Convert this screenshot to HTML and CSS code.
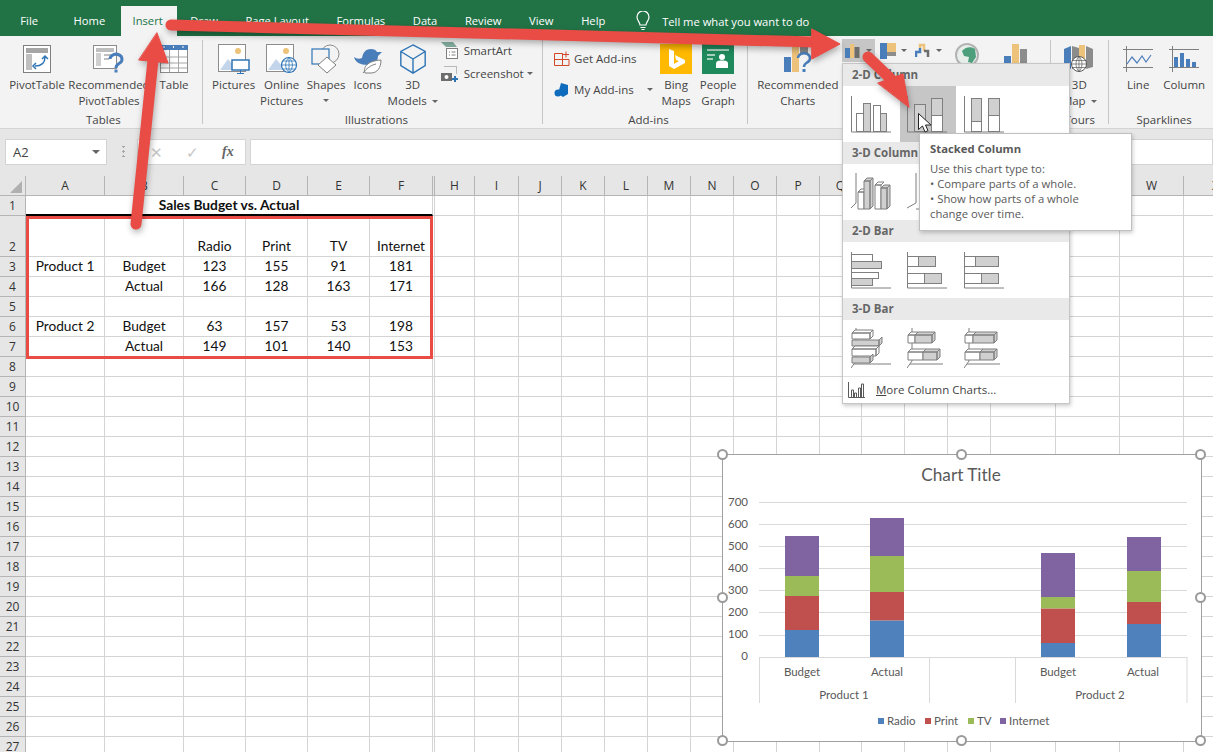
FILE: index.html
```html
<!DOCTYPE html>
<html lang="en">
<head>
  <meta charset="UTF-8">
  <title>Sales Budget - Excel</title>
  <link rel="stylesheet" href="styles.css">
</head>
<body>

<div class="app">
  <div class="tabs">
    <span class="tab tab-file">File</span>
    <span class="tab">Home</span>
    <span class="tab active">Insert</span>
    <span class="tab">Draw</span>
    <span class="tab">Page Layout</span>
    <span class="tab">Formulas</span>
    <span class="tab">Data</span>
    <span class="tab">Review</span>
    <span class="tab">View</span>
    <span class="tab">Help</span>
    <span class="tell-me">
      <svg width="14" height="20" viewBox="0 0 14 20" fill="none" stroke="#fff" stroke-width="1.2"><path d="M4 14c0-3-3-4-3-8a6 6 0 0 1 12 0c0 4-3 5-3 8z"/><path d="M4.500 16.500h5M5.500 18.500h3"/></svg>
      Tell me what you want to do
    </span>
  </div>

  <div class="ribbon">
    <div class="group group-tables">
      <div class="group-body">
        <div class="btn w64">
          <svg width="28" height="28" viewBox="0 0 28 28"><rect x=".5" y=".5" width="27" height="27" fill="#fff" stroke="#7f7f7f"/><rect x="3" y="3" width="22" height="5" fill="#a6a6a6"/><rect x="3" y="9" width="6" height="16" fill="#bfbfbf"/><path d="M12 21c6 0 10-3 10-9M13 18l-3 3 3 3M19 14l3-3 3 3" fill="none" stroke="#2f75b5" stroke-width="1.500"/></svg>
          <span>PivotTable</span>
        </div>
        <div class="btn w80">
          <svg width="32" height="28" viewBox="0 0 32 28"><rect x=".5" y=".5" width="23" height="23" fill="#fff" stroke="#8c8c8c"/><rect x="3" y="3" width="18" height="4" fill="#bfbfbf"/><rect x="3" y="8" width="5" height="13" fill="#d0d0d0"/><path d="M11 10h10M11 14h5" stroke="#bfbfbf" stroke-width="2"/><path d="M17 14a6 5 0 1 1 9 4.500c-2 1.200-3 2-3 4.500" fill="none" stroke="#4a7ebb" stroke-width="3"/><rect x="21.500" y="24.500" width="3" height="3" fill="#4a7ebb"/></svg>
          <span>Recommended PivotTables</span>
        </div>
        <div class="btn w50">
          <svg width="28" height="28" viewBox="0 0 28 28"><rect x=".5" y=".5" width="27" height="27" fill="#fff" stroke="#8c8c8c"/><rect x="0" y="0" width="28" height="5" fill="#4a7ebb"/><path d="M4 1v2M13.500 1v2M23 1v2" stroke="#fff"/><path d="M1 12h26M1 18h26M1 23h26M9.500 5v22M18.500 5v22" stroke="#a6a6a6"/></svg>
          <span>Table</span>
        </div>
      </div>
      <div class="group-label">Tables</div>
    </div>
    <div class="sep"></div>

    <div class="group group-illus">
      <div class="group-body">
        <div class="btn w46">
          <svg width="32" height="30" viewBox="0 0 32 30"><rect x=".5" y=".5" width="27" height="27" fill="#fff" stroke="#8c8c8c"/><circle cx="20" cy="7" r="3" fill="#edc27a"/><path d="M2 26l8-11 7 8v3z" fill="#c3d5ea"/><rect x="14" y="16" width="17" height="10" fill="#fff" stroke="#2f75b5" stroke-width="1.500"/><path d="M22.500 26v3M19 29.500h7" stroke="#2f75b5"/></svg>
          <span>Pictures</span>
        </div>
        <div class="btn w50">
          <svg width="32" height="30" viewBox="0 0 32 30"><rect x=".5" y=".5" width="27" height="27" fill="#fff" stroke="#8c8c8c"/><circle cx="20" cy="7" r="3" fill="#edc27a"/><path d="M2 26l8-11 7 8v3z" fill="#c3d5ea"/><circle cx="23" cy="21" r="7.500" fill="#fff" stroke="#2f75b5" stroke-width="1.200"/><path d="M15.500 21h15M16.500 17h13M16.500 25h13M23 13.500v15M23 13.500c-4.500 4-4.500 11 0 15M23 13.500c4.500 4 4.500 11 0 15" fill="none" stroke="#2f75b5" stroke-width=".8"/></svg>
          <span>Online Pictures</span>
        </div>
        <div class="btn w39">
          <svg width="30" height="30" viewBox="0 0 30 30" fill="none"><circle cx="19" cy="10" r="9" stroke="#8c8c8c"/><rect x="1" y="5" width="17" height="15" fill="#f3f3f3" stroke="#2f75b5" stroke-width="1.200"/><path d="M16 13l9 8-9 8-9-8z" fill="#fff" stroke="#7f7f7f"/></svg>
          <span>Shapes</span>
          <i class="caret caret-under"></i>
        </div>
        <div class="btn w44">
          <svg width="30" height="30" viewBox="0 0 30 30"><path d="M1 13c3 2 5 2 8 1 1-5 3-9 9-9 3 0 5 1 6 3l5 0-4 4c0 6-4 9-10 9-8 0-13-3-14-8z" fill="#4a7ebb"/><path d="M12 29c-2-6 2-12 16-13 0 8-4 13-10 13z" fill="#fff" stroke="#7f7f7f"/><path d="M10 29c3-4 8-8 13-9" fill="none" stroke="#7f7f7f"/></svg>
          <span>Icons</span>
        </div>
        <div class="btn w46">
          <svg width="28" height="32" viewBox="0 0 28 32" fill="none" stroke="#2f75b5" stroke-width="1.500"><path d="M14 1l13 7v15l-13 8-13-8V8zM1 8l13 8 13-8M14 16v15"/></svg>
          <span class="nowrap">3D<br>Models <i class="caret"></i></span>
        </div>
        <div class="small-col col-illus">
          <div class="small-btn">
            <svg width="17" height="17" viewBox="0 0 17 17"><path d="M0 0h12l4 5H5z" fill="#7fa99b"/><rect x="5.500" y="6.500" width="11" height="10" fill="#fff" stroke="#7f7f7f"/><path d="M8 10h1M8 13h1M10.500 10h4M10.500 13h4" stroke="#7f7f7f"/></svg>
            <span>SmartArt</span>
          </div>
          <div class="small-btn">
            <svg width="17" height="17" viewBox="0 0 17 17"><path d="M3.500 1.500h12v8" fill="none" stroke="#7f7f7f" stroke-dasharray="1 1"/><rect x="0" y="8" width="11" height="8" fill="#6d6d6d"/><circle cx="5.500" cy="12" r="2" fill="#fff"/><path d="M11 14h6M14 11v6" stroke="#2f75b5" stroke-width="2"/></svg>
            <span>Screenshot</span><i class="caret caret-tight"></i>
          </div>
        </div>
      </div>
      <div class="group-label">Illustrations</div>
    </div>
    <div class="sep"></div>

    <div class="group group-addins">
      <div class="group-body">
        <div class="small-col col-addins">
          <div class="small-btn">
            <svg width="16" height="16" viewBox="0 0 16 16" fill="none" stroke="#d24726"><path d="M.5 2.500h8v12H.5zM.5 8.500h14.500v6H8.500M8.500 2.500v12M12 .5v6M9 3.500h6"/></svg>
            <span>Get Add-ins</span>
          </div>
          <div class="small-btn">
            <svg width="16" height="16" viewBox="0 0 16 16"><path d="M7 1l7 2v9l-5 3-3-2V8H5z" fill="#0f6cbd"/><circle cx="4" cy="11" r="3.500" fill="#0f6cbd"/></svg>
            <span>My Add-ins</span><i class="caret caret-wide"></i>
          </div>
        </div>
        <div class="btn w42">
          <svg width="32" height="30" viewBox="0 0 32 30"><rect width="32" height="30" fill="#ffb900"/><path d="M9 5l5 2v13l5-3-3-1-1-5 10 5v3l-11 6-5-3z" fill="#fff"/></svg>
          <span>Bing Maps</span>
        </div>
        <div class="btn w42">
          <svg width="32" height="30" viewBox="0 0 32 30"><rect width="32" height="30" fill="#1f8a5c"/><path d="M5 6h22M5 11h8M5 15h6" stroke="#a5d0bc" stroke-width="2"/><circle cx="20" cy="13" r="3" fill="#fff"/><path d="M14 24v-4c0-3 2-3.500 6-3.500s6 .5 6 3.500v4z" fill="#fff"/></svg>
          <span>People Graph</span>
        </div>
      </div>
      <div class="group-label">Add-ins</div>
    </div>
    <div class="sep"></div>

    <div class="group group-charts">
      <div class="group-body">
        <div class="btn w74">
          <svg width="28" height="28" viewBox="0 0 28 28"><rect x="0" y="12" width="7" height="15" fill="#4a7ebb"/><rect x="8" y="2" width="7" height="25" fill="#edc27a"/><rect x="16" y="2" width="8" height="7" fill="#8c8c8c"/><path d="M14 13a6 5 0 1 1 9 4.500c-2 1.200-3 2-3 4.500" fill="none" stroke="#4a7ebb" stroke-width="2.500"/><rect x="18.500" y="24" width="3" height="3" fill="#4a7ebb"/></svg>
          <span>Recommended Charts</span>
        </div>
        <div class="chart-icons">
          <div class="chart-icon open">
            <svg width="16" height="16" viewBox="0 0 16 16"><rect x="0" y="5" width="5" height="10" fill="#4a7ebb"/><rect x="5" y="1" width="4.500" height="14" fill="#edc27a"/><rect x="9.500" y="4" width="5" height="11" fill="#6d6d6d"/></svg>
            <i class="caret"></i>
          </div>
          <div class="chart-icon">
            <svg width="16" height="16" viewBox="0 0 16 16"><rect width="7" height="16" fill="#4a7ebb"/><rect x="7" width="9" height="9" fill="#edc27a"/><rect x="7" y="9" width="9" height="4" fill="#8c8c8c"/></svg>
            <i class="caret"></i>
          </div>
          <div class="chart-icon">
            <svg width="16" height="16" viewBox="0 0 16 16" fill="none" stroke-width="2.500"><path d="M1 14V9h4V5" stroke="#4a7ebb"/><path d="M5 5V2h4v6" stroke="#edc27a"/><path d="M9 8h4v6" stroke="#6d6d6d"/></svg>
            <i class="caret"></i>
          </div>
          <svg class="icon-maps" width="25" height="24" viewBox="0 0 25 24"><circle cx="12" cy="12" r="11" fill="#e8eeea" stroke="#b3b3b3" stroke-width="2"/><path d="M7 8c3-4 9-5 13-2l1 8-4 6-4-1 1-5-5-1z" fill="#4da07b"/></svg>
          <svg class="icon-pivot" width="30" height="24" viewBox="0 0 30 24"><rect x="0" y="12" width="7" height="12" fill="#4a7ebb"/><rect x="8" y="0" width="7" height="24" fill="#edc27a"/><rect x="16" y="5" width="7" height="19" fill="#8c8c8c"/></svg>
        </div>
      </div>
    </div>
    <div class="sep"></div>

    <div class="group group-tours">
      <div class="group-body">
        <div class="btn w56">
          <svg width="30" height="28" viewBox="0 0 30 28"><path d="M0 4l7-3v23l-7-3z" fill="#4a7ebb"/><path d="M8 1l7 2v20l-7 1z" fill="#8c8c8c"/><path d="M15 0h6v22h-6z" fill="#edc27a"/><path d="M22 1l7 3v18l-7 2z" fill="#8c8c8c"/><circle cx="15" cy="19" r="7.500" fill="#fff" stroke="#595959"/><path d="M7.500 19h15M8.500 15.500h13M8.500 22.500h13M15 11.500v15M15 11.500c-4 4-4 11 0 15M15 11.500c4 4 4 11 0 15" fill="none" stroke="#595959" stroke-width=".7"/></svg>
          <span class="nowrap">3D<br>Map <i class="caret"></i></span>
        </div>
      </div>
      <div class="group-label">Tours</div>
    </div>
    <div class="sep"></div>

    <div class="group group-spark">
      <div class="group-body">
        <div class="btn w46">
          <svg width="30" height="28" viewBox="0 0 30 28" fill="none"><path d="M0 4.500h30M0 22.500h30M3.500 1v26" stroke="#7f7f7f"/><path d="M4 19l5-7 5 6 5-7 4 6 5-7" stroke="#4a7ebb" stroke-width="1.200"/></svg>
          <span>Line</span>
        </div>
        <div class="btn w46">
          <svg width="30" height="28" viewBox="0 0 30 28"><path d="M0 4.500h30M0 22.500h30M3.500 1v26" stroke="#7f7f7f" fill="none"/><rect x="5" y="12" width="4" height="10" fill="#4a7ebb"/><rect x="11" y="8" width="4" height="14" fill="#4a7ebb"/><rect x="17" y="14" width="4" height="8" fill="#4a7ebb"/><rect x="23" y="17" width="4" height="5" fill="#4a7ebb"/></svg>
          <span>Column</span>
        </div>
      </div>
      <div class="group-label">Sparklines</div>
    </div>
  </div>

  <div class="formula-bar">
    <div class="name-box">A2<i class="caret caret-dark"></i></div>
    <div class="bar-dots"></div>
    <div class="fx-box">
      <span class="fx-mark">&#10005;</span>
      <span class="fx-mark">&#10003;</span>
      <span class="fx-label">fx</span>
    </div>
    <div class="formula-input"></div>
  </div>

  <div class="sheet">
    <table class="grid" id="grid"></table>
  </div>

  <div class="selection-box"></div>

  <div class="chart">
    <svg class="chart-svg" width="480" height="288" viewBox="722 454 480 288">
      <text class="chart-title" x="961" y="481" text-anchor="middle">Chart Title</text>
      <g class="gridlines">
        <path d="M759 502.500H1187M759 524.500H1187M759 546.500H1187M759 568.500H1187M759 590.500H1187M759 612.500H1187M759 635.500H1187M759 657.500H1187"/>
        <path d="M759.500 657V703M929.500 657V703M1015.500 657V703M1187 657V703"/>
      </g>
      <g class="axis-text" text-anchor="end">
        <text x="748" y="506">700</text>
        <text x="748" y="528">600</text>
        <text x="748" y="550">500</text>
        <text x="748" y="572">400</text>
        <text x="748" y="594">300</text>
        <text x="748" y="616">200</text>
        <text x="748" y="638">100</text>
        <text x="748" y="660">0</text>
      </g>
      <g fill="#4f81bd">
        <rect x="785" y="630" width="34" height="27"/>
        <rect x="870" y="620.400" width="34" height="36.600"/>
        <rect x="1041" y="643" width="34" height="14"/>
        <rect x="1127" y="624" width="34" height="33"/>
      </g>
      <g fill="#c0504d">
        <rect x="785" y="596" width="34" height="34"/>
        <rect x="870" y="592" width="34" height="28.400"/>
        <rect x="1041" y="608.400" width="34" height="34.600"/>
        <rect x="1127" y="602" width="34" height="22"/>
      </g>
      <g fill="#9bbb59">
        <rect x="785" y="576" width="34" height="20"/>
        <rect x="870" y="556" width="34" height="36"/>
        <rect x="1041" y="597" width="34" height="11.400"/>
        <rect x="1127" y="571" width="34" height="31"/>
      </g>
      <g fill="#8064a2">
        <rect x="785" y="536" width="34" height="40"/>
        <rect x="870" y="518" width="34" height="38"/>
        <rect x="1041" y="553" width="34" height="44"/>
        <rect x="1127" y="537" width="34" height="34"/>
      </g>
      <g class="axis-text" text-anchor="middle">
        <text x="802" y="676">Budget</text>
        <text x="887" y="676">Actual</text>
        <text x="1058" y="676">Budget</text>
        <text x="1143" y="676">Actual</text>
        <text x="844" y="699">Product 1</text>
        <text x="1100" y="699">Product 2</text>
      </g>
      <g class="axis-text">
        <rect x="878" y="718" width="6" height="6" fill="#4f81bd"/><text x="887" y="725">Radio</text>
        <rect x="925" y="718" width="6" height="6" fill="#c0504d"/><text x="934" y="725">Print</text>
        <rect x="968" y="718" width="6" height="6" fill="#9bbb59"/><text x="977" y="725">TV</text>
        <rect x="1000" y="718" width="6" height="6" fill="#8064a2"/><text x="1009" y="725">Internet</text>
      </g>
    </svg>
    <i class="handle h-tl"></i><i class="handle h-tc"></i><i class="handle h-tr"></i>
    <i class="handle h-ml"></i><i class="handle h-mr"></i>
    <i class="handle h-bl"></i><i class="handle h-bc"></i><i class="handle h-br"></i>
  </div>

  <div class="chart-menu">
    <div class="menu-head">2-D Column</div>
    <div class="menu-row">
      <div class="menu-cell">
        <svg width="41" height="38" viewBox="0 0 41 38"><rect class="ci-w" x="5.500" y="18.500" width="7" height="18"/><rect class="ci-g" x="12.500" y="8.500" width="7" height="28"/><rect class="ci-w" x="22.500" y="10.500" width="7" height="26"/><rect class="ci-g" x="29.500" y="18.500" width="6" height="18"/><path class="ci-a" d="M.5 1v36H40"/></svg>
      </div>
      <div class="menu-cell hover">
        <svg width="41" height="38" viewBox="0 0 41 38"><rect class="ci-g" x="7.500" y="9.500" width="11" height="27"/><rect class="ci-g" x="24.500" y="3.500" width="11" height="17"/><rect class="ci-w" x="24.500" y="20.500" width="11" height="16"/><path class="ci-a" d="M.5 1v36H40"/></svg>
      </div>
      <div class="menu-cell">
        <svg width="41" height="38" viewBox="0 0 41 38"><rect class="ci-g" x="7.500" y="3.500" width="10" height="23"/><rect class="ci-w" x="7.500" y="26.500" width="10" height="10"/><rect class="ci-g" x="24.500" y="3.500" width="11" height="17"/><rect class="ci-w" x="24.500" y="20.500" width="11" height="16"/><path class="ci-a" d="M.5 1v36H40"/></svg>
      </div>
    </div>
    <div class="menu-head">3-D Column</div>
    <div class="menu-row">
      <div class="menu-cell">
        <svg width="41" height="40" viewBox="0 0 41 40"><path class="ci-a" d="M5 1v30L0 36"/><path class="ci-w" d="M7 20h6v17H7zM7 20l3-3h6l-3 3z"/><path class="ci-g" d="M13 9h6v28h-6zM13 9l3-3h6l-3 3zM19 9l3-3v28l-3 3z"/><path class="ci-w" d="M24 13h6v24h-6zM24 13l3-3h6l-3 3z"/><path class="ci-g" d="M30 16h6v21h-6zM30 16l3-3h6l-3 3zM36 16l3-3v21l-3 3z"/></svg>
      </div>
      <div class="menu-cell">
        <svg width="41" height="40" viewBox="0 0 41 40"><path class="ci-a" d="M9 1v30L0 36M9 37H40"/></svg>
      </div>
      <div class="menu-cell"></div>
    </div>
    <div class="menu-head">2-D Bar</div>
    <div class="menu-row">
      <div class="menu-cell">
        <svg width="41" height="38" viewBox="0 0 41 38"><rect class="ci-w" x=".5" y="3.500" width="21" height="7"/><rect class="ci-g" x=".5" y="10.500" width="30" height="7"/><rect class="ci-w" x=".5" y="21.500" width="27" height="6"/><rect class="ci-g" x=".5" y="27.500" width="21" height="7"/><path class="ci-a" d="M.5 1v36H40"/></svg>
      </div>
      <div class="menu-cell">
        <svg width="41" height="38" viewBox="0 0 41 38"><rect class="ci-w" x=".5" y="5.500" width="11" height="10"/><rect class="ci-g" x="11.500" y="5.500" width="17" height="10"/><rect class="ci-w" x=".5" y="22.500" width="17" height="10"/><rect class="ci-g" x="17.500" y="22.500" width="17" height="10"/><path class="ci-a" d="M.5 1v36H40"/></svg>
      </div>
      <div class="menu-cell">
        <svg width="41" height="38" viewBox="0 0 41 38"><rect class="ci-w" x=".5" y="5.500" width="11" height="10"/><rect class="ci-g" x="11.500" y="5.500" width="23" height="10"/><rect class="ci-w" x=".5" y="22.500" width="17" height="10"/><rect class="ci-g" x="17.500" y="22.500" width="17" height="10"/><path class="ci-a" d="M.5 1v36H40"/></svg>
      </div>
    </div>
    <div class="menu-head">3-D Bar</div>
    <div class="menu-row">
      <div class="menu-cell">
        <svg width="41" height="41" viewBox="0 0 41 41"><path class="ci-a" d="M5 0v33L0 40M3 36H40"/><path class="ci-w" d="M1 5h18v6H1zM1 5l3-3h18l-3 3zM19 5l3-3v6l-3 3z"/><path class="ci-g" d="M1 12h27v6H1zM28 12l3-3v6l-3 3z"/><path class="ci-w" d="M1 21h24v7H1zM1 21l3-3h24l-3 3zM25 21l3-3v7l-3 3z"/><path class="ci-g" d="M1 29h18v6H1zM19 29l3-3v6l-3 3z"/></svg>
      </div>
      <div class="menu-cell">
        <svg width="41" height="41" viewBox="0 0 41 41"><path class="ci-a" d="M5 0v33L0 40M3 36H36"/><path class="ci-w" d="M1 7h7v8H1zM1 7l3-3h7l-3 3z"/><path class="ci-g" d="M8 7h17v8H8zM8 7l3-3h17l-3 3zM25 7l3-3v8l-3 3z"/><path class="ci-w" d="M1 24h15v8H1zM1 24l3-3h15l-3 3z"/><path class="ci-g" d="M16 24h14v8H16zM16 24l3-3h14l-3 3zM30 24l3-3v8l-3 3z"/></svg>
      </div>
      <div class="menu-cell">
        <svg width="41" height="41" viewBox="0 0 41 41"><path class="ci-a" d="M5 0v33L0 40M3 36H36"/><path class="ci-w" d="M1 7h8v8H1zM1 7l3-3h8l-3 3z"/><path class="ci-g" d="M9 7h21v8H9zM9 7l3-3h21l-3 3zM30 7l3-3v8l-3 3z"/><path class="ci-w" d="M1 24h15v8H1zM1 24l3-3h15l-3 3z"/><path class="ci-g" d="M16 24h14v8H16zM16 24l3-3h14l-3 3zM30 24l3-3v8l-3 3z"/></svg>
      </div>
    </div>
    <div class="menu-more">
      <svg width="17" height="16" viewBox="0 0 17 16" fill="none" stroke="#595959"><path d="M.5 0v15.500H17M3.500 15V8h2v7M6.500 15V11h2v4M10.500 15V6h2v9M13.500 15V2h2v13"/></svg>
      <span><u>M</u>ore Column Charts...</span>
    </div>
  </div>

  <div class="tooltip">
    <h4>Stacked Column</h4>
    <p>Use this chart type to:<br>&bull; Compare parts of a whole.<br>&bull; Show how parts of a whole<br>change over time.</p>
  </div>

  <svg class="arrows" width="1213" height="752" viewBox="0 0 1213 752">
    <g fill="#e94b45" stroke="#e94b45" stroke-linecap="round">
      <path d="M171 25L815 42" stroke-width="11" fill="none"/>
      <path d="M812 29L840 44 812 59z" stroke-width="1"/>
      <path d="M136 224L153 60" stroke-width="11" fill="none"/>
      <path d="M157 33L168 63 139 60z" stroke-width="1"/>
      <path d="M868 57L892 80" stroke-width="11" fill="none"/>
      <path d="M878 83L903 74 909 107z" stroke-width="1"/>
    </g>
  </svg>

  <svg class="cursor" width="14" height="20" viewBox="0 0 14 20"><path d="M.5.5v16l4-3.500 2.500 6 3-1.300-2.500-5.700h5.500z" fill="#fff" stroke="#222"/></svg>
</div>

<script src="script.js"></script>
</body>
</html>
```

FILE: styles.css
```css
* {
  box-sizing: border-box;
  margin: 0;
  padding: 0;
}

body {
  font-family: "Open Sans", "Noto Sans", sans-serif;
  font-size: 11.5px;
  color: #444;
  background: #fff;
}

.app {
  position: relative;
  width: 1213px;
  height: 752px;
  overflow: hidden;
}

.nowrap {
  white-space: nowrap;
}

/* tabs */
.tabs {
  display: flex;
  height: 36px;
  padding-top: 6px;
  background: #217346;
  color: #fff;
  font-size: 11.200px;
}

.tab {
  padding: 0 13.800px;
  line-height: 30px;
}

.tab-file {
  margin: 0 8px 0 6.500px;
}

.tab.active {
  margin-left: 1.500px;
  padding-left: 12px;
  background: #f3f3f3;
  color: #217346;
}

.tell-me {
  display: flex;
  align-items: center;
  gap: 12px;
  margin-left: 17px;
  height: 30px;
}

/* ribbon */
.ribbon {
  display: flex;
  height: 93px;
  background: #f3f3f3;
  border-bottom: 1px solid #d4d4d4;
}

.sep {
  width: 1px;
  margin: 4px 0 4px;
  background: #c6c6c6;
}

.group {
  display: flex;
  flex-direction: column;
  padding-top: 4px;
}

.group-tables { width: 202px; padding-left: 5px; }
.group-illus { width: 340px; padding-left: 8px; }
.group-addins { width: 204px; padding-left: 7px; }
.group-charts { width: 303px; padding-left: 13px; }
.group-tours { width: 57px; padding-left: 0; }
.group-spark { width: 104px; padding-left: 6px; }

.group-body {
  display: flex;
  height: 72px;
}

.group-label {
  line-height: 16px;
  text-align: center;
  color: #444;
}

.btn {
  display: flex;
  flex-direction: column;
  align-items: center;
  text-align: center;
  line-height: 16px;
  flex: none;
  padding-top: 4px;
}

.btn svg {
  height: 30px;
  margin-bottom: 3px;
  flex: none;
}

.w39 { width: 39px; }
.w42 { width: 42px; }
.w44 { width: 44px; }
.w46 { width: 46px; }
.w50 { width: 50px; }
.w56 { width: 56px; }
.w64 { width: 64px; }
.w74 { width: 74px; }
.w80 { width: 80px; }

.caret {
  display: inline-block;
  width: 0;
  height: 0;
  border-left: 3px solid transparent;
  border-right: 3px solid transparent;
  border-top: 3px solid #666;
  vertical-align: middle;
  margin-left: 2px;
}

.caret-under { margin: 6px 0 0; }
.caret-wide { margin-left: 9px; }
.caret-tight { margin-left: -3px; }
.caret-dark { border-left-width: 4px; border-right-width: 4px; border-top-width: 4px; margin-left: auto; }

.small-col {
  display: flex;
  flex-direction: column;
}

.col-illus {
  width: 99px;
  margin-left: 5px;
  padding-top: 2px;
  gap: 6px;
}

.col-illus .small-btn {
  gap: 6px;
}

.col-addins {
  width: 105px;
  gap: 14px;
  padding: 10px 0 0 4px;
}

.small-btn {
  display: flex;
  align-items: center;
  gap: 4px;
  height: 17px;
}

.chart-icons {
  position: relative;
  display: flex;
  align-items: flex-start;
  margin: -1px 0 0 7px;
  flex: 1;
}

.chart-icon {
  display: flex;
  align-items: center;
  gap: 3px;
  height: 23px;
  padding: 0 3px;
  margin-right: 2px;
}

.chart-icon.open {
  background: #c6c6c6;
  width: 33px;
}

.icon-maps {
  margin: 4px 0 0 8px;
}

.icon-pivot {
  margin: 5px 0 0 24px;
}

/* formula bar */
.formula-bar {
  display: flex;
  height: 36px;
  padding: 10px 0 0 5px;
  background: #e6e6e6;
}

.name-box {
  display: flex;
  align-items: center;
  width: 102px;
  height: 26px;
  padding: 0 6px 0 7px;
  background: #fff;
  border: 1px solid #d4d4d4;
  font-size: 13px;
}

.bar-dots {
  width: 30px;
  height: 26px;
  background: radial-gradient(circle, #a6a6a6 1px, transparent 1.300px);
  background-size: 3px 5px;
  background-repeat: repeat-y;
  background-position: 15px 0;
  clip-path: inset(7px 0 8px 0);
}

.fx-box {
  display: flex;
  align-items: center;
  width: 109px;
  height: 26px;
  padding-left: 12px;
  background: #fff;
  border: 1px solid #d4d4d4;
}

.fx-mark {
  width: 36px;
  color: #c6c6c6;
  font-size: 15px;
}

.fx-label {
  font-family: "Liberation Serif", serif;
  font-style: italic;
  font-weight: bold;
  font-size: 14px;
  color: #666;
}

.formula-input {
  flex: 1;
  height: 26px;
  margin-left: 4px;
  background: #fff;
  border: 1px solid #d4d4d4;
}

/* sheet */
.sheet {
  background: #e6e6e6;
  padding-top: 11px;
  height: 587px;
}

.grid {
  table-layout: fixed;
  border-collapse: separate;
  border-spacing: 0;
  background: #fff;
  font-family: Lato, "Open Sans", sans-serif;
  font-size: 13.700px;
  color: #111;
}

.grid td,
.grid th {
  height: 20px;
  padding: 0 0 1px;
  border-right: 1px solid #d4d4d4;
  border-bottom: 1px solid #d4d4d4;
  text-align: center;
  vertical-align: bottom;
  line-height: 17px;
  white-space: nowrap;
  overflow: hidden;
}

.grid td {
  line-height: 16px;
  padding-bottom: 2px;
}

.grid th {
  background: #e6e6e6;
  font-family: "Open Sans", sans-serif;
  font-weight: 400;
  font-size: 12px;
  color: #333;
  border-color: #b5b5b5;
}

.grid .corner {
  position: relative;
  height: 19px;
}

.grid .corner::after {
  content: "";
  position: absolute;
  right: 3px;
  bottom: 2px;
  border-left: 12px solid transparent;
  border-bottom: 12px solid #b0b0b0;
}

.grid .title-cell {
  font-weight: 700;
  font-size: 13.800px;
  border-bottom: 2px solid #000;
  padding-bottom: 1px;
}

.grid .tall td,
.grid .tall th {
  height: 41px;
}

/* things lying over the sheet */
.selection-box {
  position: absolute;
  left: 26px;
  top: 216px;
  width: 407px;
  height: 143px;
  border: 3px solid #e94b45;
}

.chart {
  position: absolute;
  left: 722px;
  top: 454px;
  width: 480px;
  height: 288px;
  background: #fff;
  border: 1px solid #a0a0a0;
}

.chart-svg {
  position: absolute;
  left: -1px;
  top: -1px;
}

.chart-title {
  font-family: Lato, sans-serif;
  font-size: 17.200px;
  fill: #595959;
}

.axis-text {
  font-family: Lato, sans-serif;
  font-size: 11.500px;
  fill: #595959;
}

.gridlines {
  fill: none;
  stroke: #d9d9d9;
}

.handle {
  position: absolute;
  width: 11px;
  height: 11px;
  margin: -6px 0 0 -6px;
  border: 2px solid #9a9a9a;
  border-radius: 50%;
  background: #fff;
}

.h-tl { left: 0; top: 0; }
.h-tc { left: 50%; top: 0; }
.h-tr { left: 100%; top: 0; }
.h-ml { left: 0; top: 50%; }
.h-mr { left: 100%; top: 50%; }
.h-bl { left: 0; top: 100%; }
.h-bc { left: 50%; top: 100%; }
.h-br { left: 100%; top: 100%; }

.chart-menu {
  position: absolute;
  left: 842px;
  top: 63px;
  width: 228px;
  height: 341px;
  background: #fff;
  border: 1px solid #c6c6c6;
  box-shadow: 1px 2px 4px rgba(0, 0, 0, 0.2);
}

.menu-head {
  height: 22px;
  padding-left: 9px;
  background: #e9e9e9;
  font-weight: 700;
  line-height: 22px;
  color: #666;
}

.menu-row {
  display: flex;
  height: 56px;
}

.menu-cell {
  display: flex;
  align-items: center;
  justify-content: center;
  width: 56.500px;
}

.menu-cell.hover {
  background: #c6c6c6;
}

.ci-w { fill: #fff; stroke: #7f7f7f; }
.ci-g { fill: #d0d0d0; stroke: #7f7f7f; }
.ci-a { fill: none; stroke: #7f7f7f; }

.menu-more {
  display: flex;
  align-items: center;
  gap: 11px;
  height: 26px;
  padding-left: 5px;
  border-top: 1px solid #e1e1e1;
}

.tooltip {
  position: absolute;
  left: 919px;
  top: 133px;
  width: 213px;
  height: 98px;
  padding: 7px 10px;
  background: #fff;
  border: 1px solid #bfbfbf;
  box-shadow: 1px 2px 4px rgba(0, 0, 0, 0.2);
  color: #595959;
  font-size: 11.300px;
  line-height: 15px;
}

.tooltip h4 {
  font-size: 11.300px;
  font-weight: 700;
  line-height: 15px;
  margin-bottom: 5px;
}

.arrows {
  position: absolute;
  left: 0;
  top: 0;
  filter: drop-shadow(1px 3px 3px rgba(0, 0, 0, 0.3));
  pointer-events: none;
}

.cursor {
  position: absolute;
  left: 918px;
  top: 113px;
}
```

FILE: script.js
```js
const widths = [26, 79, 79, 62, 62, 62, 63, 2, 40, 44, 43, 43, 43, 43, 43, 43, 43, 42, 43, 43, 43, 65, 64, 64, 64];
// R to V sit behind the chart menu and its tooltip
const letters = ["A", "B", "C", "D", "E", "F", "", "H", "I", "J", "K", "L", "M", "N", "O", "P", "Q", "", "", "", "", "", "W", "X"];

const rows = {
  2: ["", "", "Radio", "Print", "TV", "Internet"],
  3: ["Product 1", "Budget", "123", "155", "91", "181"],
  4: ["", "Actual", "166", "128", "163", "171"],
  6: ["Product 2", "Budget", "63", "157", "53", "198"],
  7: ["", "Actual", "149", "101", "140", "153"]
};

const grid = document.getElementById("grid");

let html = "<colgroup>" + widths.map(w => `<col style="width:${w}px">`).join("") + "</colgroup>";
html += `<tr><th class="corner"></th>${letters.map(l => `<th>${l}</th>`).join("")}</tr>`;

for (let r = 1; r <= 27; r++) {
  const cells = rows[r] || [];
  const rowClass = r === 2 ? ' class="tall"' : "";
  html += `<tr${rowClass}><th>${r}</th>`;
  if (r === 1) {
    html += '<td class="title-cell" colspan="6">Sales Budget vs. Actual</td>';
  }
  letters.forEach((l, i) => {
    if (r === 1 && i < 6) return;
    html += `<td>${cells[i] || ""}</td>`;
  });
  html += "</tr>";
}

grid.innerHTML = html;
grid.style.width = widths.reduce((a, b) => a + b, 0) + "px";
```
